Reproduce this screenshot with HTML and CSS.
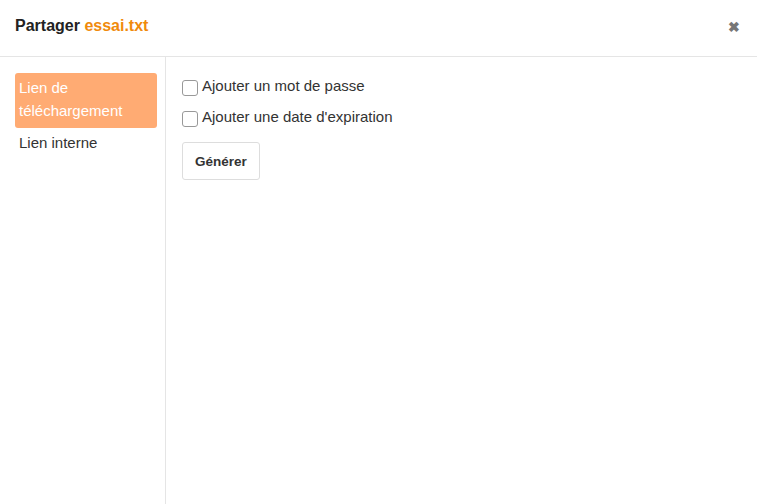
FILE: index.html
```html
<!DOCTYPE html>
<html lang="fr">
<head>
<meta charset="utf-8">
<title>Partager essai.txt</title>
<link rel="stylesheet" href="styles.css">
</head>
<body>
<div class="modal">
  <header class="modal-header">
    <h1 class="title">Partager <span class="filename">essai.txt</span></h1>
    <span class="close" aria-label="Fermer">&#10006;</span>
  </header>
  <div class="modal-body">
    <nav class="sidebar">
      <a class="nav-item active">Lien de téléchargement</a>
      <a class="nav-item">Lien interne</a>
    </nav>
    <main class="content">
      <label class="check"><span class="box"></span>Ajouter un mot de passe</label>
      <label class="check"><span class="box"></span>Ajouter une date d'expiration</label>
      <button class="btn">Générer</button>
    </main>
  </div>
</div>
</body>
</html>
```
FILE: styles.css
```css
* { box-sizing: border-box; }
html, body {
  margin: 0;
  height: 100%;
  background: #fff;
  font-family: "Liberation Sans", Arial, sans-serif;
  color: #333;
}
.modal {
  display: flex;
  flex-direction: column;
  height: 504px;
  width: 757px;
}
.modal-header {
  height: 57px;
  border-bottom: 1px solid #e5e5e5;
  display: flex;
  align-items: center;
  justify-content: space-between;
  padding: 0 17px 0 15px;
  flex-shrink: 0;
}
.title {
  margin: 0;
  font-size: 16px;
  font-weight: bold;
  color: #222;
  position: relative;
  top: -2px;
}
.filename { color: #f08a0c; }
.close {
  color: #777;
  font-size: 14px;
  font-weight: bold;
  position: relative;
  top: -1px;
}
.modal-body {
  flex: 1;
  display: flex;
}
.sidebar {
  width: 166px;
  border-right: 1px solid #e5e5e5;
  padding: 16px 8px 0 15px;
  display: flex;
  flex-direction: column;
}
.nav-item {
  display: block;
  padding: 3px 4px 6px;
  font-size: 15px;
  line-height: 23px;
  color: #333;
  border-radius: 3px;
}
.nav-item.active {
  background: #ffab73;
  color: #fff;
}
.content {
  flex: 1;
  padding: 18px 16px;
  display: flex;
  flex-direction: column;
  align-items: flex-start;
}
.check {
  display: flex;
  align-items: center;
  font-size: 15px;
  line-height: 21px;
  color: #333;
  margin-bottom: 10px;
}
.box {
  width: 16px;
  height: 16px;
  border: 1px solid #999;
  border-radius: 3px;
  margin-right: 4px;
  margin-top: 4px;
  background: #fff;
}
.btn {
  margin-top: 5px;
  height: 38px;
  padding: 0 12px;
  border: 1px solid #ddd;
  border-radius: 3px;
  background: #fff;
  font-family: "Liberation Sans", Arial, sans-serif;
  font-size: 13.5px;
  font-weight: bold;
  color: #333;
}
```
